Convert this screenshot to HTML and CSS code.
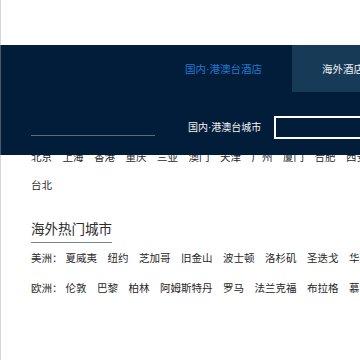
FILE: index.html
```html
<!DOCTYPE html>
<html lang="zh-CN">
<head>
<meta charset="utf-8">
<title>酒店</title>
<link rel="stylesheet" href="styles.css">
</head>
<body>
<div class="page">
  <section class="hot">
    <div class="city-list domestic">
      <a>北京</a><a>上海</a><a>香港</a><a>重庆</a><a>三亚</a><a>澳门</a><a>天津</a><a>广州</a><a>厦门</a><a>合肥</a><a>西安</a><a>杭州</a><a>成都</a><a>南京</a><a>深圳</a><a>苏州</a><a>青岛</a><a>武汉</a><a>大连</a><a>昆明</a><a>台北</a>
    </div>
    <h2 class="hot-title">海外热门城市</h2>
    <div class="region"><span class="region-name">美洲：</span><a>夏威夷</a><a>纽约</a><a>芝加哥</a><a>旧金山</a><a>波士顿</a><a>洛杉矶</a><a>圣迭戈</a><a>华盛顿</a><a>西雅图</a></div>
    <div class="region"><span class="region-name">欧洲：</span><a>伦敦</a><a>巴黎</a><a>柏林</a><a>阿姆斯特丹</a><a>罗马</a><a>法兰克福</a><a>布拉格</a><a>慕尼黑</a><a>米兰</a></div>
  </section>

  <div class="search-panel">
    <div class="panel-left"><span class="panel-line"></span></div>
    <div class="panel-right">
      <div class="tabs">
        <span class="tab active">国内<span class="dot">·</span>港澳台酒店</span>
        <span class="tab other">海外酒店</span>
      </div>
      <div class="form-row">
        <label class="field-label">国内<span class="dot">·</span>港澳台城市</label>
        <span class="field-input"></span>
      </div>
    </div>
  </div>
</div>
</body>
</html>
```
FILE: styles.css
```css
html, body {
  margin: 0;
  padding: 0;
  overflow: hidden;
  background: #fff;
}
body {
  font-family: "Noto Sans CJK SC", "Noto Sans", sans-serif;
  color: #2b2b2b;
}
.page {
  position: relative;
  width: 1000px;
  min-height: 360px;
  border-left: 1px solid #d6d6d6;
  padding: 143px 0 0 30px;
  box-sizing: border-box;
}
.dot {
  font-family: "Liberation Sans", sans-serif;
}
.hot a {
  margin-right: 10.5px;
  color: #262626;
}
.city-list {
  width: 640px;
  font-size: 10.5px;
  line-height: 28px;
}
.hot-title {
  display: inline-block;
  margin: 19px 0 0;
  padding-bottom: 4px;
  font-size: 13.5px;
  line-height: 20px;
  font-weight: normal;
  color: #2b2b2b;
  border-bottom: 1px solid #7b8491;
}
.region {
  font-size: 10.5px;
  line-height: 30px;
  white-space: nowrap;
}
.region:first-of-type {
  margin-top: 4px;
}
.region-name {
  margin-right: 3px;
}

.search-panel {
  position: absolute;
  top: 45px;
  left: -1px;
  right: 0;
  height: 110px;
  background: #011d3a;
  border-left: 1px solid #4a5868;
  display: grid;
  grid-template-columns: 154px 1fr;
}
.panel-left {
  padding: 90px 0 0 30px;
}
.panel-line {
  display: block;
  width: 124px;
  border-top: 1px solid #5d6c7c;
}
.tabs {
  display: flex;
  height: 47px;
}
.tab {
  padding: 0 30px;
  font-size: 10.5px;
  line-height: 47px;
}
.tab.active {
  color: #2079d2;
}
.tab.other {
  background: #173a57;
  color: #eef0f2;
  width: 200px;
}
.form-row {
  display: flex;
  align-items: center;
  gap: 13px;
  padding: 23px 0 0 33px;
}
.field-label {
  font-size: 10px;
  line-height: 23px;
  color: #f2f2f2;
}
.field-input {
  display: block;
  width: 200px;
  height: 23px;
  box-sizing: border-box;
  border: 2px solid #fff;
}
```
